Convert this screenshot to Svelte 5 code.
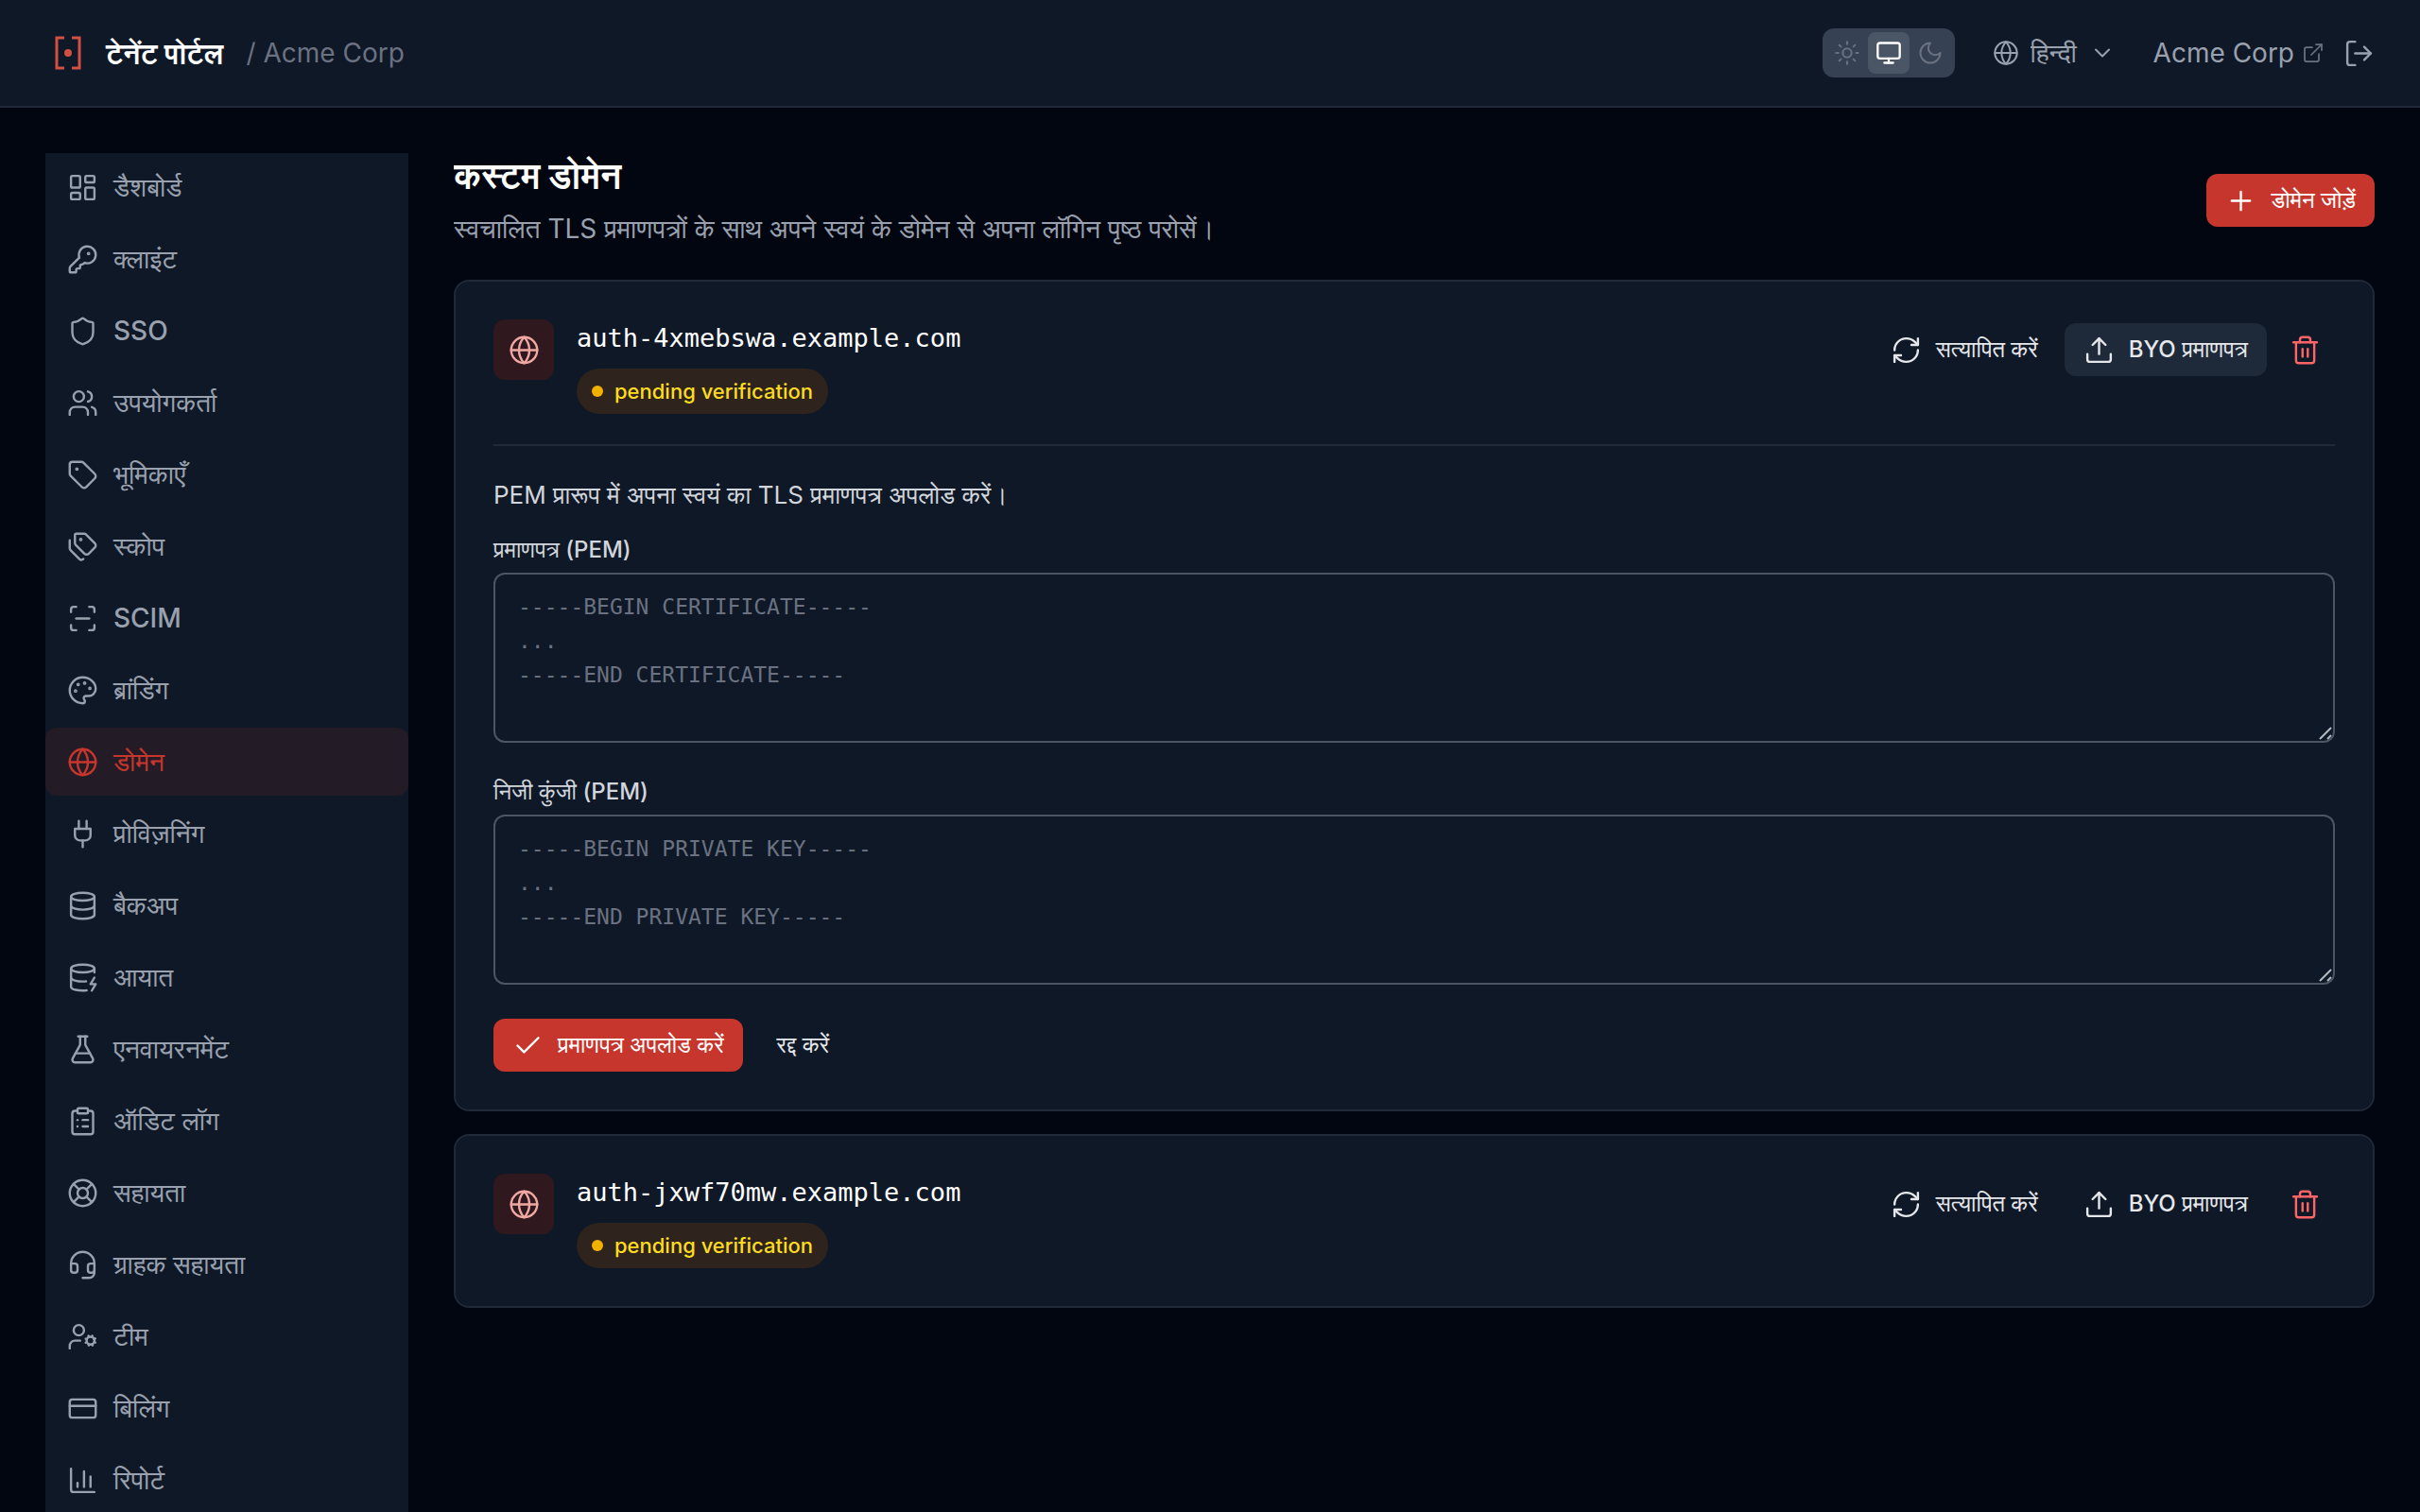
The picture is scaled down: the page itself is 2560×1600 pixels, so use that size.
<script lang="ts">
  interface NavItem {
    label: string;
    icon: string;
  }

  interface Domain {
    id: number;
    host: string;
    status: string;
  }

  // 24x24 stroke icons
  const icons: Record<string, string> = {
    dashboard:
      '<rect width="7" height="9" x="3" y="3" rx="1"/><rect width="7" height="5" x="14" y="3" rx="1"/><rect width="7" height="9" x="14" y="12" rx="1"/><rect width="7" height="5" x="3" y="16" rx="1"/>',
    key: '<path d="M2.586 17.414A2 2 0 0 0 2 18.828V21a1 1 0 0 0 1 1h3a1 1 0 0 0 1-1v-1a1 1 0 0 1 1-1h1a1 1 0 0 0 1-1v-1a1 1 0 0 1 1-1h.172a2 2 0 0 0 1.414-.586l.814-.814a6.5 6.5 0 1 0-4-4z"/><circle cx="16.5" cy="7.5" r=".5" fill="currentColor"/>',
    shield:
      '<path d="M20 13c0 5-3.5 7.5-7.66 8.95a1 1 0 0 1-.67-.01C7.5 20.5 4 18 4 13V6a1 1 0 0 1 1-1c2 0 4.5-1.2 6.24-2.72a1.17 1.17 0 0 1 1.52 0C14.51 3.81 17 5 19 5a1 1 0 0 1 1 1z"/>',
    users:
      '<path d="M16 21v-2a4 4 0 0 0-4-4H6a4 4 0 0 0-4 4v2"/><circle cx="9" cy="7" r="4"/><path d="M22 21v-2a4 4 0 0 0-3-3.87"/><path d="M16 3.13a4 4 0 0 1 0 7.75"/>',
    tag: '<path d="M12.586 2.586A2 2 0 0 0 11.172 2H4a2 2 0 0 0-2 2v7.172a2 2 0 0 0 .586 1.414l8.704 8.704a2.426 2.426 0 0 0 3.42 0l6.58-6.58a2.426 2.426 0 0 0 0-3.42z"/><circle cx="7.5" cy="7.5" r=".5" fill="currentColor"/>',
    tags: '<path d="M13.172 2a2 2 0 0 1 1.414.586l6.71 6.71a2.4 2.4 0 0 1 0 3.408l-4.592 4.592a2.4 2.4 0 0 1-3.408 0l-6.71-6.71A2 2 0 0 1 6 9.172V3a1 1 0 0 1 1-1z"/><path d="M2 7v6.172a2 2 0 0 0 .586 1.414l6.71 6.71a2.4 2.4 0 0 0 3.191.193"/><circle cx="10.5" cy="6.5" r=".5" fill="currentColor"/>',
    scan: '<path d="M3 7V5a2 2 0 0 1 2-2h2"/><path d="M17 3h2a2 2 0 0 1 2 2v2"/><path d="M21 17v2a2 2 0 0 1-2 2h-2"/><path d="M7 21H5a2 2 0 0 1-2-2v-2"/><path d="M7 12h10"/>',
    palette:
      '<circle cx="13.5" cy="6.5" r=".5" fill="currentColor"/><circle cx="17.5" cy="10.5" r=".5" fill="currentColor"/><circle cx="8.5" cy="7.5" r=".5" fill="currentColor"/><circle cx="6.5" cy="12.5" r=".5" fill="currentColor"/><path d="M12 2C6.5 2 2 6.5 2 12s4.5 10 10 10c.926 0 1.648-.746 1.648-1.688 0-.437-.18-.835-.437-1.125-.29-.289-.438-.652-.438-1.125a1.64 1.64 0 0 1 1.668-1.668h1.996c3.051 0 5.555-2.503 5.555-5.554C21.965 6.012 17.461 2 12 2z"/>',
    globe:
      '<circle cx="12" cy="12" r="10"/><path d="M12 2a14.5 14.5 0 0 0 0 20 14.5 14.5 0 0 0 0-20"/><path d="M2 12h20"/>',
    plug: '<path d="M12 22v-5"/><path d="M9 8V2"/><path d="M15 8V2"/><path d="M18 8v5a4 4 0 0 1-4 4h-4a4 4 0 0 1-4-4V8Z"/>',
    database:
      '<ellipse cx="12" cy="5" rx="9" ry="3"/><path d="M3 5v14a9 3 0 0 0 18 0V5"/><path d="M3 12a9 3 0 0 0 18 0"/>',
    databaseZap:
      '<ellipse cx="12" cy="5" rx="9" ry="3"/><path d="M3 5v14a9 3 0 0 0 12 2.84"/><path d="M21 5v3"/><path d="m21 12-3 5h4l-3 5"/><path d="M3 12a9 3 0 0 0 11.59 2.87"/>',
    flask:
      '<path d="M14 2v6a2 2 0 0 0 .245.96l5.51 10.08A2 2 0 0 1 18 22H6a2 2 0 0 1-1.755-2.96l5.51-10.08A2 2 0 0 0 10 8V2"/><path d="M6.453 15h11.094"/><path d="M8.5 2h7"/>',
    clipboard:
      '<rect width="8" height="4" x="8" y="2" rx="1" ry="1"/><path d="M16 4h2a2 2 0 0 1 2 2v14a2 2 0 0 1-2 2H6a2 2 0 0 1-2-2V6a2 2 0 0 1 2-2h2"/><path d="M12 11h4"/><path d="M12 16h4"/><path d="M8 11h.01"/><path d="M8 16h.01"/>',
    lifebuoy:
      '<circle cx="12" cy="12" r="10"/><path d="m4.93 4.93 4.24 4.24"/><path d="m14.83 9.17 4.24-4.24"/><path d="m14.83 14.83 4.24 4.24"/><path d="m9.17 14.83-4.24 4.24"/><circle cx="12" cy="12" r="4"/>',
    headset:
      '<path d="M3 11h3a2 2 0 0 1 2 2v3a2 2 0 0 1-2 2H5a2 2 0 0 1-2-2v-5Zm0 0a9 9 0 1 1 18 0m0 0v5a2 2 0 0 1-2 2h-1a2 2 0 0 1-2-2v-3a2 2 0 0 1 2-2h3Z"/><path d="M21 16v2a4 4 0 0 1-4 4h-5"/>',
    userCog:
      '<circle cx="18" cy="15" r="3"/><circle cx="9" cy="7" r="4"/><path d="M10 15H6a4 4 0 0 0-4 4v2"/><path d="m21.7 16.4-.9-.3"/><path d="m15.2 13.9-.9-.3"/><path d="m16.6 18.7.3-.9"/><path d="m19.1 12.2.3-.9"/><path d="m19.6 18.7-.4-1"/><path d="m16.8 12.3-.4-1"/><path d="m14.3 16.6 1-.4"/><path d="m20.7 13.8 1-.4"/>',
    card: '<rect width="20" height="14" x="2" y="5" rx="2"/><path d="M2 10h20"/>',
    chart: '<path d="M3 3v16a2 2 0 0 0 2 2h16"/><path d="M18 17V9"/><path d="M13 17V5"/><path d="M8 17v-3"/>',
    sun: '<circle cx="12" cy="12" r="4"/><path d="M12 2v2"/><path d="M12 20v2"/><path d="m4.93 4.93 1.41 1.41"/><path d="m17.66 17.66 1.41 1.41"/><path d="M2 12h2"/><path d="M20 12h2"/><path d="m6.34 17.66-1.41 1.41"/><path d="m19.07 4.93-1.41 1.41"/>',
    monitor: '<rect width="20" height="14" x="2" y="3" rx="2"/><path d="M8 21h8"/><path d="M12 17v4"/>',
    moon: '<path d="M12 3a6 6 0 0 0 9 9 9 9 0 1 1-9-9Z"/>',
    chevron: '<path d="m6 9 6 6 6-6"/>',
    external: '<path d="M15 3h6v6"/><path d="M10 14 21 3"/><path d="M18 13v6a2 2 0 0 1-2 2H5a2 2 0 0 1-2-2V8a2 2 0 0 1 2-2h6"/>',
    logout: '<path d="M9 21H5a2 2 0 0 1-2-2V5a2 2 0 0 1 2-2h4"/><path d="m16 17 5-5-5-5"/><path d="M21 12H9"/>',
    plus: '<path d="M5 12h14"/><path d="M12 5v14"/>',
    refresh:
      '<path d="M3 12a9 9 0 0 1 9-9 9.75 9.75 0 0 1 6.74 2.74L21 8"/><path d="M21 3v5h-5"/><path d="M21 12a9 9 0 0 1-9 9 9.75 9.75 0 0 1-6.74-2.74L3 16"/><path d="M8 16H3v5"/>',
    upload: '<path d="M21 15v4a2 2 0 0 1-2 2H5a2 2 0 0 1-2-2v-4"/><path d="m17 8-5-5-5 5"/><path d="M12 3v12"/>',
    trash:
      '<path d="M3 6h18"/><path d="M19 6v14a2 2 0 0 1-2 2H7a2 2 0 0 1-2-2V6"/><path d="M8 6V4a2 2 0 0 1 2-2h4a2 2 0 0 1 2 2v2"/><path d="M10 11v6"/><path d="M14 11v6"/>',
    check: '<path d="M20 6 9 17l-5-5"/>',
  };

  const navItems: NavItem[] = [
    { label: "डैशबोर्ड", icon: "dashboard" },
    { label: "क्लाइंट", icon: "key" },
    { label: "SSO", icon: "shield" },
    { label: "उपयोगकर्ता", icon: "users" },
    { label: "भूमिकाएँ", icon: "tag" },
    { label: "स्कोप", icon: "tags" },
    { label: "SCIM", icon: "scan" },
    { label: "ब्रांडिंग", icon: "palette" },
    { label: "डोमेन", icon: "globe" },
    { label: "प्रोविज़निंग", icon: "plug" },
    { label: "बैकअप", icon: "database" },
    { label: "आयात", icon: "databaseZap" },
    { label: "एनवायरनमेंट", icon: "flask" },
    { label: "ऑडिट लॉग", icon: "clipboard" },
    { label: "सहायता", icon: "lifebuoy" },
    { label: "ग्राहक सहायता", icon: "headset" },
    { label: "टीम", icon: "userCog" },
    { label: "बिलिंग", icon: "card" },
    { label: "रिपोर्ट", icon: "chart" },
  ];

  const themes = [
    { id: "light", icon: "sun" },
    { id: "system", icon: "monitor" },
    { id: "dark", icon: "moon" },
  ];

  const certPlaceholder = "-----BEGIN CERTIFICATE-----\n...\n-----END CERTIFICATE-----";
  const keyPlaceholder = "-----BEGIN PRIVATE KEY-----\n...\n-----END PRIVATE KEY-----";

  let domains = $state<Domain[]>([
    { id: 1, host: "auth-4xmebswa.example.com", status: "pending verification" },
    { id: 2, host: "auth-jxwf70mw.example.com", status: "pending verification" },
  ]);
  let activeNav = $state("डोमेन");
  let theme = $state("system");
  let openForm = $state<number | null>(1);
  let certificate = $state("");
  let privateKey = $state("");

  const toggleForm = (id: number) => {
    openForm = openForm === id ? null : id;
    certificate = "";
    privateKey = "";
  };

  const removeDomain = (id: number) => {
    domains = domains.filter((domain) => domain.id !== id);
  };
</script>

{#snippet icon(name: string, kind = "")}
  <svg class="icon {kind}" viewBox="0 0 24 24" aria-hidden="true">{@html icons[name]}</svg>
{/snippet}

<div class="shell">
  <header class="topbar">
    <a class="brand" href="#home">
      <svg class="logo" viewBox="0 0 32 36" aria-hidden="true">
        <path d="M12 2H4v32h8M20 2h8v32h-8" />
        <circle cx="16" cy="18" r="4" />
      </svg>
      <span class="brand-name">टेनेंट पोर्टल</span>
    </a>
    <span class="crumb">/ Acme Corp</span>

    <div class="tools">
      <div class="themes" role="group" aria-label="Theme">
        {#each themes as option (option.id)}
          <button
            type="button"
            class:active={theme === option.id}
            aria-label={option.id}
            aria-pressed={theme === option.id}
            onclick={() => (theme = option.id)}
          >
            {@render icon(option.icon, "small")}
          </button>
        {/each}
      </div>
      <label class="language">
        {@render icon("globe", "small")}
        <select aria-label="Language">
          <option>हिन्दी</option>
        </select>
        {@render icon("chevron", "small")}
      </label>
      <a class="account" href="#account">
        Acme Corp
        {@render icon("external", "tiny")}
      </a>
      <button type="button" class="logout" aria-label="Log out">
        {@render icon("logout")}
      </button>
    </div>
  </header>

  <div class="body">
    <nav class="sidebar">
      {#each navItems as item (item.label)}
        <a
          href="#{item.icon}"
          class:active={activeNav === item.label}
          onclick={() => (activeNav = item.label)}
        >
          {@render icon(item.icon)}
          <span>{item.label}</span>
        </a>
      {/each}
    </nav>

    <main>
      <div class="page-head">
        <div>
          <h1>कस्टम डोमेन</h1>
          <p>स्वचालित TLS प्रमाणपत्रों के साथ अपने स्वयं के डोमेन से अपना लॉगिन पृष्ठ परोसें।</p>
        </div>
        <button type="button" class="btn primary">
          {@render icon("plus")}
          डोमेन जोड़ें
        </button>
      </div>

      <div class="cards">
        {#each domains as domain (domain.id)}
          <section class="card">
            <div class="card-head">
              <div class="badge-icon">{@render icon("globe")}</div>
              <div class="info">
                <div class="host">{domain.host}</div>
                <span class="status"><i class="dot"></i>{domain.status}</span>
              </div>
              <div class="actions">
                <button type="button" class="btn">
                  {@render icon("refresh")}
                  सत्यापित करें
                </button>
                <button
                  type="button"
                  class="btn"
                  class:selected={openForm === domain.id}
                  onclick={() => toggleForm(domain.id)}
                >
                  {@render icon("upload")}
                  BYO प्रमाणपत्र
                </button>
                <button
                  type="button"
                  class="delete"
                  aria-label="Delete {domain.host}"
                  onclick={() => removeDomain(domain.id)}
                >
                  {@render icon("trash")}
                </button>
              </div>
            </div>

            {#if openForm === domain.id}
              <form class="cert-form" onsubmit={(event) => event.preventDefault()}>
                <p>PEM प्रारूप में अपना स्वयं का TLS प्रमाणपत्र अपलोड करें।</p>
                <div class="field">
                  <label for="certificate">प्रमाणपत्र (PEM)</label>
                  <textarea
                    id="certificate"
                    rows="4"
                    spellcheck="false"
                    placeholder={certPlaceholder}
                    bind:value={certificate}
                  ></textarea>
                </div>
                <div class="field">
                  <label for="private-key">निजी कुंजी (PEM)</label>
                  <textarea
                    id="private-key"
                    rows="4"
                    spellcheck="false"
                    placeholder={keyPlaceholder}
                    bind:value={privateKey}
                  ></textarea>
                </div>
                <div class="form-actions">
                  <button type="submit" class="btn primary">
                    {@render icon("check")}
                    प्रमाणपत्र अपलोड करें
                  </button>
                  <button type="button" class="btn" onclick={() => toggleForm(domain.id)}>
                    रद्द करें
                  </button>
                </div>
              </form>
            {/if}
          </section>
        {/each}
      </div>
    </main>
  </div>
</div>

<style>
  :global(body) {
    margin: 0;
    background: #020610;
    color-scheme: dark;
  }

  .shell,
  .shell * {
    box-sizing: border-box;
  }

  .shell {
    display: flex;
    flex-direction: column;
    height: 100vh;
    overflow: hidden;
    color: #99a1af;
    font-family: Inter, FreeSans, "Noto Sans", sans-serif;
    font-size: 28px;
    line-height: 40px;
  }

  button,
  select {
    font: inherit;
    color: inherit;
    background: none;
    border: 0;
    padding: 0;
    cursor: pointer;
  }

  a {
    color: inherit;
    text-decoration: none;
  }

  h1,
  p {
    margin: 0;
  }

  .icon {
    flex: none;
    width: 33px;
    height: 33px;
    fill: none;
    stroke: currentColor;
    stroke-width: 1.75;
    stroke-linecap: round;
    stroke-linejoin: round;
  }

  .icon.small {
    width: 28px;
    height: 28px;
  }

  .icon.tiny {
    width: 24px;
    height: 24px;
    color: #6a7282;
  }

  /* Top bar */
  .topbar {
    display: flex;
    flex: none;
    align-items: center;
    height: 114px;
    padding: 0 48px 0 56px;
    background: #0f1826;
    border-bottom: 2px solid #1e2939;
  }

  .brand {
    display: flex;
    align-items: center;
    gap: 24px;
  }

  .logo {
    width: 32px;
    height: 36px;
    fill: none;
    stroke: #d14f43;
    stroke-width: 3;
  }

  .logo circle {
    fill: #d14f43;
    stroke: none;
  }

  .brand-name {
    color: #fff;
    font-size: 30px;
    font-weight: 700;
  }

  .crumb {
    margin-left: 24px;
    color: #6a7282;
  }

  .tools {
    display: flex;
    align-items: center;
    margin-left: auto;
  }

  .themes {
    display: flex;
    padding: 4px;
    margin-right: 40px;
    background: #364153;
    border-radius: 12px;
    color: #6a7282;
  }

  .themes button {
    display: grid;
    place-items: center;
    width: 44px;
    height: 44px;
    border-radius: 8px;
  }

  .themes .active {
    background: #4a5565;
    color: #fff;
  }

  .themes .active .icon {
    stroke-width: 2;
  }

  .language {
    display: flex;
    align-items: center;
    gap: 12px;
    margin-right: 40px;
  }

  .language select {
    appearance: none;
    font-size: 28px;
  }

  .account {
    display: flex;
    align-items: center;
    gap: 8px;
    margin-right: 20px;
  }

  .logout {
    display: grid;
  }

  /* Layout */
  .body {
    display: flex;
    flex: 1;
    gap: 48px;
    min-height: 0;
    padding: 48px 48px 0;
  }

  .sidebar {
    display: flex;
    flex: none;
    flex-direction: column;
    gap: 4px;
    width: 384px;
    overflow: auto;
    scrollbar-width: none;
    background: #0f1826;
  }

  .sidebar a {
    display: flex;
    flex: none;
    align-items: center;
    gap: 16px;
    height: 72px;
    padding: 0 23px;
    border-radius: 12px;
    font-weight: 500;
  }

  .sidebar .active {
    background: #231b26;
    color: #c6362c;
  }

  main {
    flex: 1;
    min-width: 0;
    overflow: auto;
    scrollbar-width: none;
  }

  .page-head {
    display: flex;
    align-items: center;
    justify-content: space-between;
    margin-bottom: 34px;
  }

  h1 {
    color: #fff;
    font-size: 37px;
    font-weight: 700;
    line-height: 48px;
  }

  .page-head p {
    margin-top: 12px;
  }

  .btn {
    display: inline-flex;
    align-items: center;
    gap: 15px;
    height: 56px;
    padding: 0 20px;
    border-radius: 12px;
    color: #e5e7eb;
    font-size: 24px;
    font-weight: 500;
    white-space: nowrap;
  }

  .btn.primary {
    background: #c6362c;
    color: #fff;
  }

  .btn.selected {
    background: #1e2939;
  }

  /* Domain cards */
  .cards {
    display: flex;
    flex-direction: column;
    gap: 24px;
  }

  .card {
    padding: 40px;
    background: #0f1826;
    border: 2px solid #1e2939;
    border-radius: 16px;
  }

  .card-head {
    display: flex;
    align-items: flex-start;
    gap: 24px;
  }

  .badge-icon {
    display: grid;
    flex: none;
    place-items: center;
    width: 64px;
    height: 64px;
    background: #30181f;
    border-radius: 12px;
    color: #f0a8a2;
  }

  .info {
    display: flex;
    flex: 1;
    flex-direction: column;
    align-items: flex-start;
    gap: 12px;
  }

  .host {
    color: #fff;
    font-family: "DejaVu Sans Mono", monospace;
    font-size: 27px;
  }

  .status {
    display: flex;
    align-items: center;
    gap: 12px;
    height: 48px;
    padding: 0 16px;
    background: #2e231d;
    border-radius: 24px;
    color: #fddc20;
    font-size: 22px;
    font-weight: 500;
  }

  .dot {
    width: 12px;
    height: 12px;
    background: #f0b100;
    border-radius: 50%;
  }

  .actions {
    display: flex;
    align-items: center;
    gap: 8px;
  }

  .delete {
    display: grid;
    place-items: center;
    width: 64px;
    height: 64px;
    color: #ff6467;
  }

  /* Certificate form */
  .cert-form {
    display: flex;
    flex-direction: column;
    gap: 36px;
    margin-top: 32px;
    padding-top: 32px;
    border-top: 2px solid #1e2939;
  }

  .cert-form p {
    margin-bottom: -14px;
    color: #d1d5dc;
    font-size: 26px;
  }

  .field {
    display: flex;
    flex-direction: column;
    gap: 8px;
  }

  .field label {
    color: #d1d5dc;
    font-size: 24px;
    font-weight: 500;
    line-height: 32px;
  }

  textarea {
    display: block;
    width: 100%;
    padding: 16px 24px;
    background: #0f1826;
    border: 2px solid #4a5565;
    border-radius: 12px;
    color: #fff;
    font-family: "DejaVu Sans Mono", monospace;
    font-size: 23px;
    line-height: 36px;
    resize: vertical;
  }

  textarea::placeholder {
    color: #6a7282;
  }

  textarea::-webkit-resizer {
    background: url("data:image/svg+xml,%3Csvg xmlns='http://www.w3.org/2000/svg' viewBox='0 0 15 15'%3E%3Cpath d='M1 13 13 1M9 13l4-4' stroke='%23b4b8bf' stroke-width='2'/%3E%3C/svg%3E");
  }

  .form-actions {
    display: flex;
    gap: 16px;
  }
</style>
